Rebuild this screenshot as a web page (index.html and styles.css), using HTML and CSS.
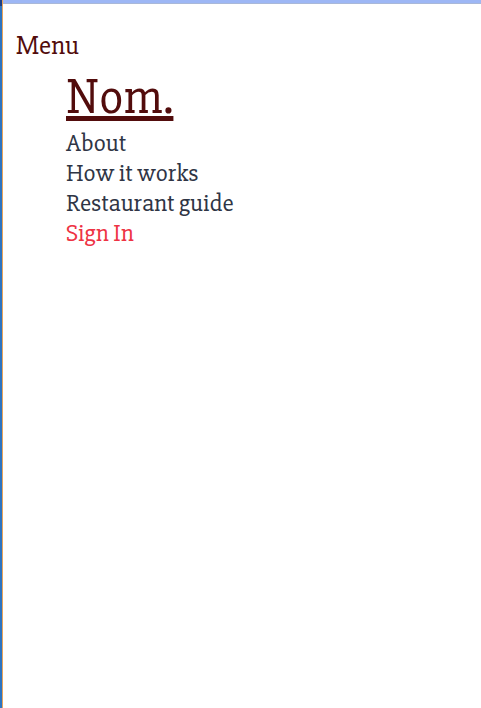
FILE: index.html
```html
<!DOCTYPE html>
<html lang="en">
<head>
<meta charset="utf-8">
<meta name="viewport" content="width=device-width, initial-scale=1">
<title>Nom.</title>
<link rel="stylesheet" href="styles.css">
</head>
<body>
<nav class="nav" aria-labelledby="menu-label">
<div class="menu-label" id="menu-label">Menu</div>
<ul class="menu">
<li><a class="brand" href="#">Nom.</a></li>
<li><a class="link" href="#about">About</a></li>
<li><a class="link" href="#how">How it works</a></li>
<li><a class="link" href="#guide">Restaurant guide</a></li>
<li><a class="link sign-in" href="#signin">Sign In</a></li>
</ul>
</nav>
</body>
</html>
```
FILE: styles.css
```css
* { box-sizing: border-box; }
body {
  margin: 0;
  min-height: 100vh;
  padding: 4px 0 0 3px;
  background:
    linear-gradient(#e8a45c, #e8a45c) 2px 0 / 1px 100% no-repeat,
    linear-gradient(#1d3f85 6px, #2e74c0 6px) 0 0 / 2px 100% no-repeat,
    linear-gradient(#9db7f5 3px, #a9b8d8 3px) 0 0 / 100% 4px no-repeat,
    #fff;
  font-family: "Slabo 27px", "Bitter", "Liberation Serif", serif;
}
.nav {
  padding: 27px 13px;
}
.menu-label {
  color: #520c0c;
  font-size: 27px;
  line-height: 30px;
}
.menu {
  margin: 7px 0 0;
  padding: 0 0 0 50px;
  list-style: none;
}
.brand {
  display: block;
  color: #520c0c;
  font-size: 50px;
  line-height: 60px;
  text-decoration-thickness: 5px;
}
.link {
  display: block;
  color: #2f3545;
  font-size: 25px;
  line-height: 30px;
  text-decoration: none;
}
.sign-in { color: #ee3344; }
```
